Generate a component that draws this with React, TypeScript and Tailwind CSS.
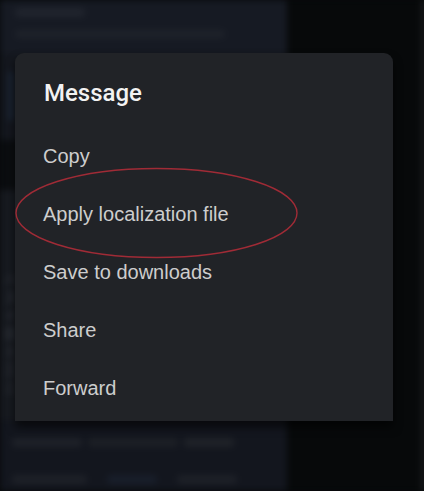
export default function App() {
    const items = ['Copy', 'Apply localization file', 'Save to downloads', 'Share', 'Forward'];

    return (
        <div className="relative w-[424px] h-[491px] overflow-hidden bg-[#07090a]">
            {/* Dimmed chat behind the sheet */}
            <div className="flex h-full blur-[3px]">
                <div className="w-[287px] flex flex-col">
                    <div className="h-[53px] bg-[#161a23] px-[15px] pt-[8px]">
                        <div className="h-[9px] w-[70px] rounded bg-[#20242d]" />
                        <div className="mt-[13px] h-[8px] w-[210px] rounded bg-[#1e222a]" />
                    </div>
                    <div className="h-[87px] bg-[#14171e] pl-[8px] pt-[18px]">
                        <div className="h-[50px] w-[6px] rounded bg-[#1b2534]" />
                    </div>
                    <div className="h-[50px] bg-[#0b0d10]" />
                    <div className="h-[230px] bg-[#171a20] pl-[4px] pt-[80px] text-[13px] leading-[18px] text-[#3a3e46] font-['Noto_Sans_CJK_JP',sans-serif]">
                        <div>ハ</div>
                        <div>ス</div>
                        <div>イ</div>
                        <div>目</div>
                        <div>ミ</div>
                        <div>三</div>
                        <div>ニ</div>
                    </div>
                    <div className="h-[71px] bg-[#13161e] px-[12px] pt-[18px]">
                        <div className="flex gap-[6px]">
                            <div className="h-[9px] w-[70px] rounded bg-[#1e2128]" />
                            <div className="h-[9px] w-[90px] rounded bg-[#1c1f25]" />
                            <div className="h-[9px] w-[50px] rounded bg-[#1f2228]" />
                        </div>
                        <div className="mt-[28px] flex gap-[20px]">
                            <div className="h-[9px] w-[75px] rounded bg-[#1d2027]" />
                            <div className="h-[9px] w-[50px] rounded bg-[#181e2a]" />
                            <div className="h-[9px] w-[60px] rounded bg-[#1d2027]" />
                        </div>
                    </div>
                </div>
                <div className="flex-1 bg-[#07090a]" />
                <div className="w-[2px] bg-[#2c2f33]" />
            </div>

            {/* Message menu */}
            <div className="absolute left-[15px] top-[53px] w-[378px] h-[368px] rounded-t-[9px] bg-[#212327] px-[28px] pt-[26px] shadow-[0_6px_10px_rgba(0,0,0,0.6)]">
                <div className="pl-[1px] text-[24px] leading-[28px] font-medium text-[#f2f2f2] font-['Roboto',sans-serif]">
                    Message
                </div>
                <div className="mt-[20px]">
                    {items.map((item) => (
                        <div key={item} className="h-[58px] flex items-center text-[20px] text-[#cdcdcd] font-['Liberation_Sans',Arial,sans-serif]">
                            {item}
                        </div>
                    ))}
                </div>
            </div>

            {/* Red circle annotation */}
            <svg className="absolute left-0 top-0" width="424" height="491" viewBox="0 0 424 491">
                <ellipse cx="156.5" cy="213" rx="140.5" ry="44.5" fill="none" stroke="#a02b36" strokeWidth="1.4" />
            </svg>
        </div>
    );
}
